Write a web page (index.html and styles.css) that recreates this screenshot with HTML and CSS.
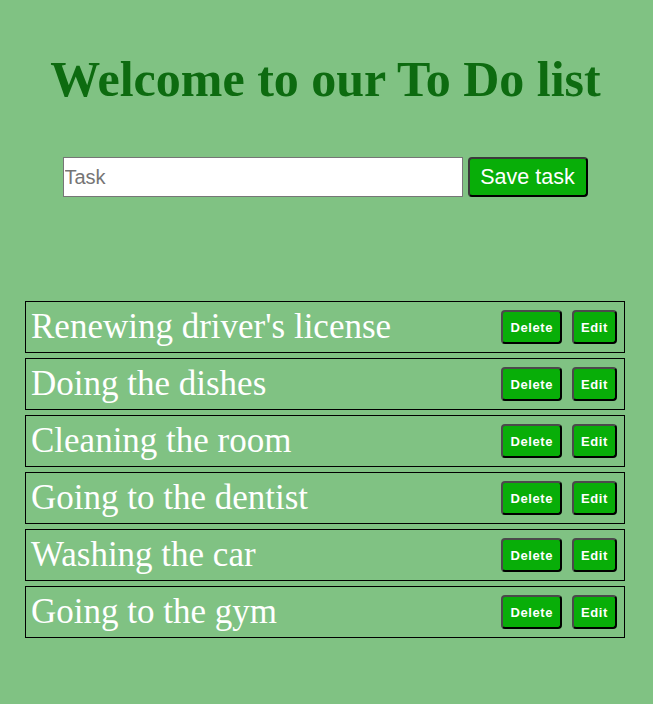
FILE: index.html
```html
<!DOCTYPE html>
<html>
<head>
<meta charset="utf-8">
<link rel="stylesheet" href="styles.css">
</head>
<body>
<h1 class="title">Welcome to our To Do list</h1>
<form class="task-form">
  <input class="task-input" type="text" placeholder="Task">
  <button class="save-btn" type="button">Save task</button>
</form>
<ul class="list">
  <li class="item"><span class="item-text">Renewing driver's license</span><span class="actions"><button class="btn">Delete</button><button class="btn">Edit</button></span></li>
  <li class="item"><span class="item-text">Doing the dishes</span><span class="actions"><button class="btn">Delete</button><button class="btn">Edit</button></span></li>
  <li class="item"><span class="item-text">Cleaning the room</span><span class="actions"><button class="btn">Delete</button><button class="btn">Edit</button></span></li>
  <li class="item"><span class="item-text">Going to the dentist</span><span class="actions"><button class="btn">Delete</button><button class="btn">Edit</button></span></li>
  <li class="item"><span class="item-text">Washing the car</span><span class="actions"><button class="btn">Delete</button><button class="btn">Edit</button></span></li>
  <li class="item"><span class="item-text">Going to the gym</span><span class="actions"><button class="btn">Delete</button><button class="btn">Edit</button></span></li>
</ul>
</body>
</html>
```
FILE: styles.css
```css
html, body {
  margin: 0;
  padding: 0;
  background: #80c283;
}
body {
  padding: 1px 0;
  font-family: "Liberation Serif", serif;
}
.title {
  margin: 50px 0 0;
  padding-right: 2px;
  text-align: center;
  font-family: "Liberation Serif", serif;
  font-weight: bold;
  font-size: 50px;
  line-height: 56px;
  color: #0d6b10;
}
.task-form {
  display: flex;
  justify-content: center;
  align-items: center;
  gap: 5px;
  margin: 50px 0 0;
  padding-right: 3px;
}
.task-input {
  box-sizing: border-box;
  width: 400px;
  height: 40px;
  padding: 1px 1px;
  border: 1px solid #767676;
  font-family: "Liberation Sans", sans-serif;
  font-size: 20px;
  background: #fff;
}
.task-input::placeholder {
  color: #757575;
}
.save-btn {
  box-sizing: border-box;
  height: 40px;
  width: 120px;
  border: 2px outset #3a3a3a;
  border-radius: 4px;
  background: #08ae08;
  color: #fff;
  font-family: "Liberation Sans", sans-serif;
  font-size: 21.5px;
  padding: 0 4px;
}
.list {
  list-style: none;
  margin: 104px 0 0 25px;
  padding: 0;
  width: 600px;
  display: flex;
  flex-direction: column;
  gap: 5px;
}
.item {
  box-sizing: border-box;
  height: 52px;
  border: 1px solid #000;
  display: flex;
  align-items: center;
  justify-content: space-between;
  padding: 0 7px 0 5px;
}
.item-text {
  color: #fff;
  font-size: 35px;
  line-height: 40px;
  font-family: "Liberation Serif", serif;
}
.actions {
  display: flex;
  gap: 10px;
  align-items: center;
}
.btn {
  box-sizing: border-box;
  height: 34px;
  padding: 0 7px;
  border: 2px outset #4a4a4a;
  border-radius: 4px;
  background: #08ae08;
  color: #fff;
  font-family: "Liberation Sans", sans-serif;
  font-size: 13px;
  font-weight: bold;
  letter-spacing: 0.6px;
}
```
